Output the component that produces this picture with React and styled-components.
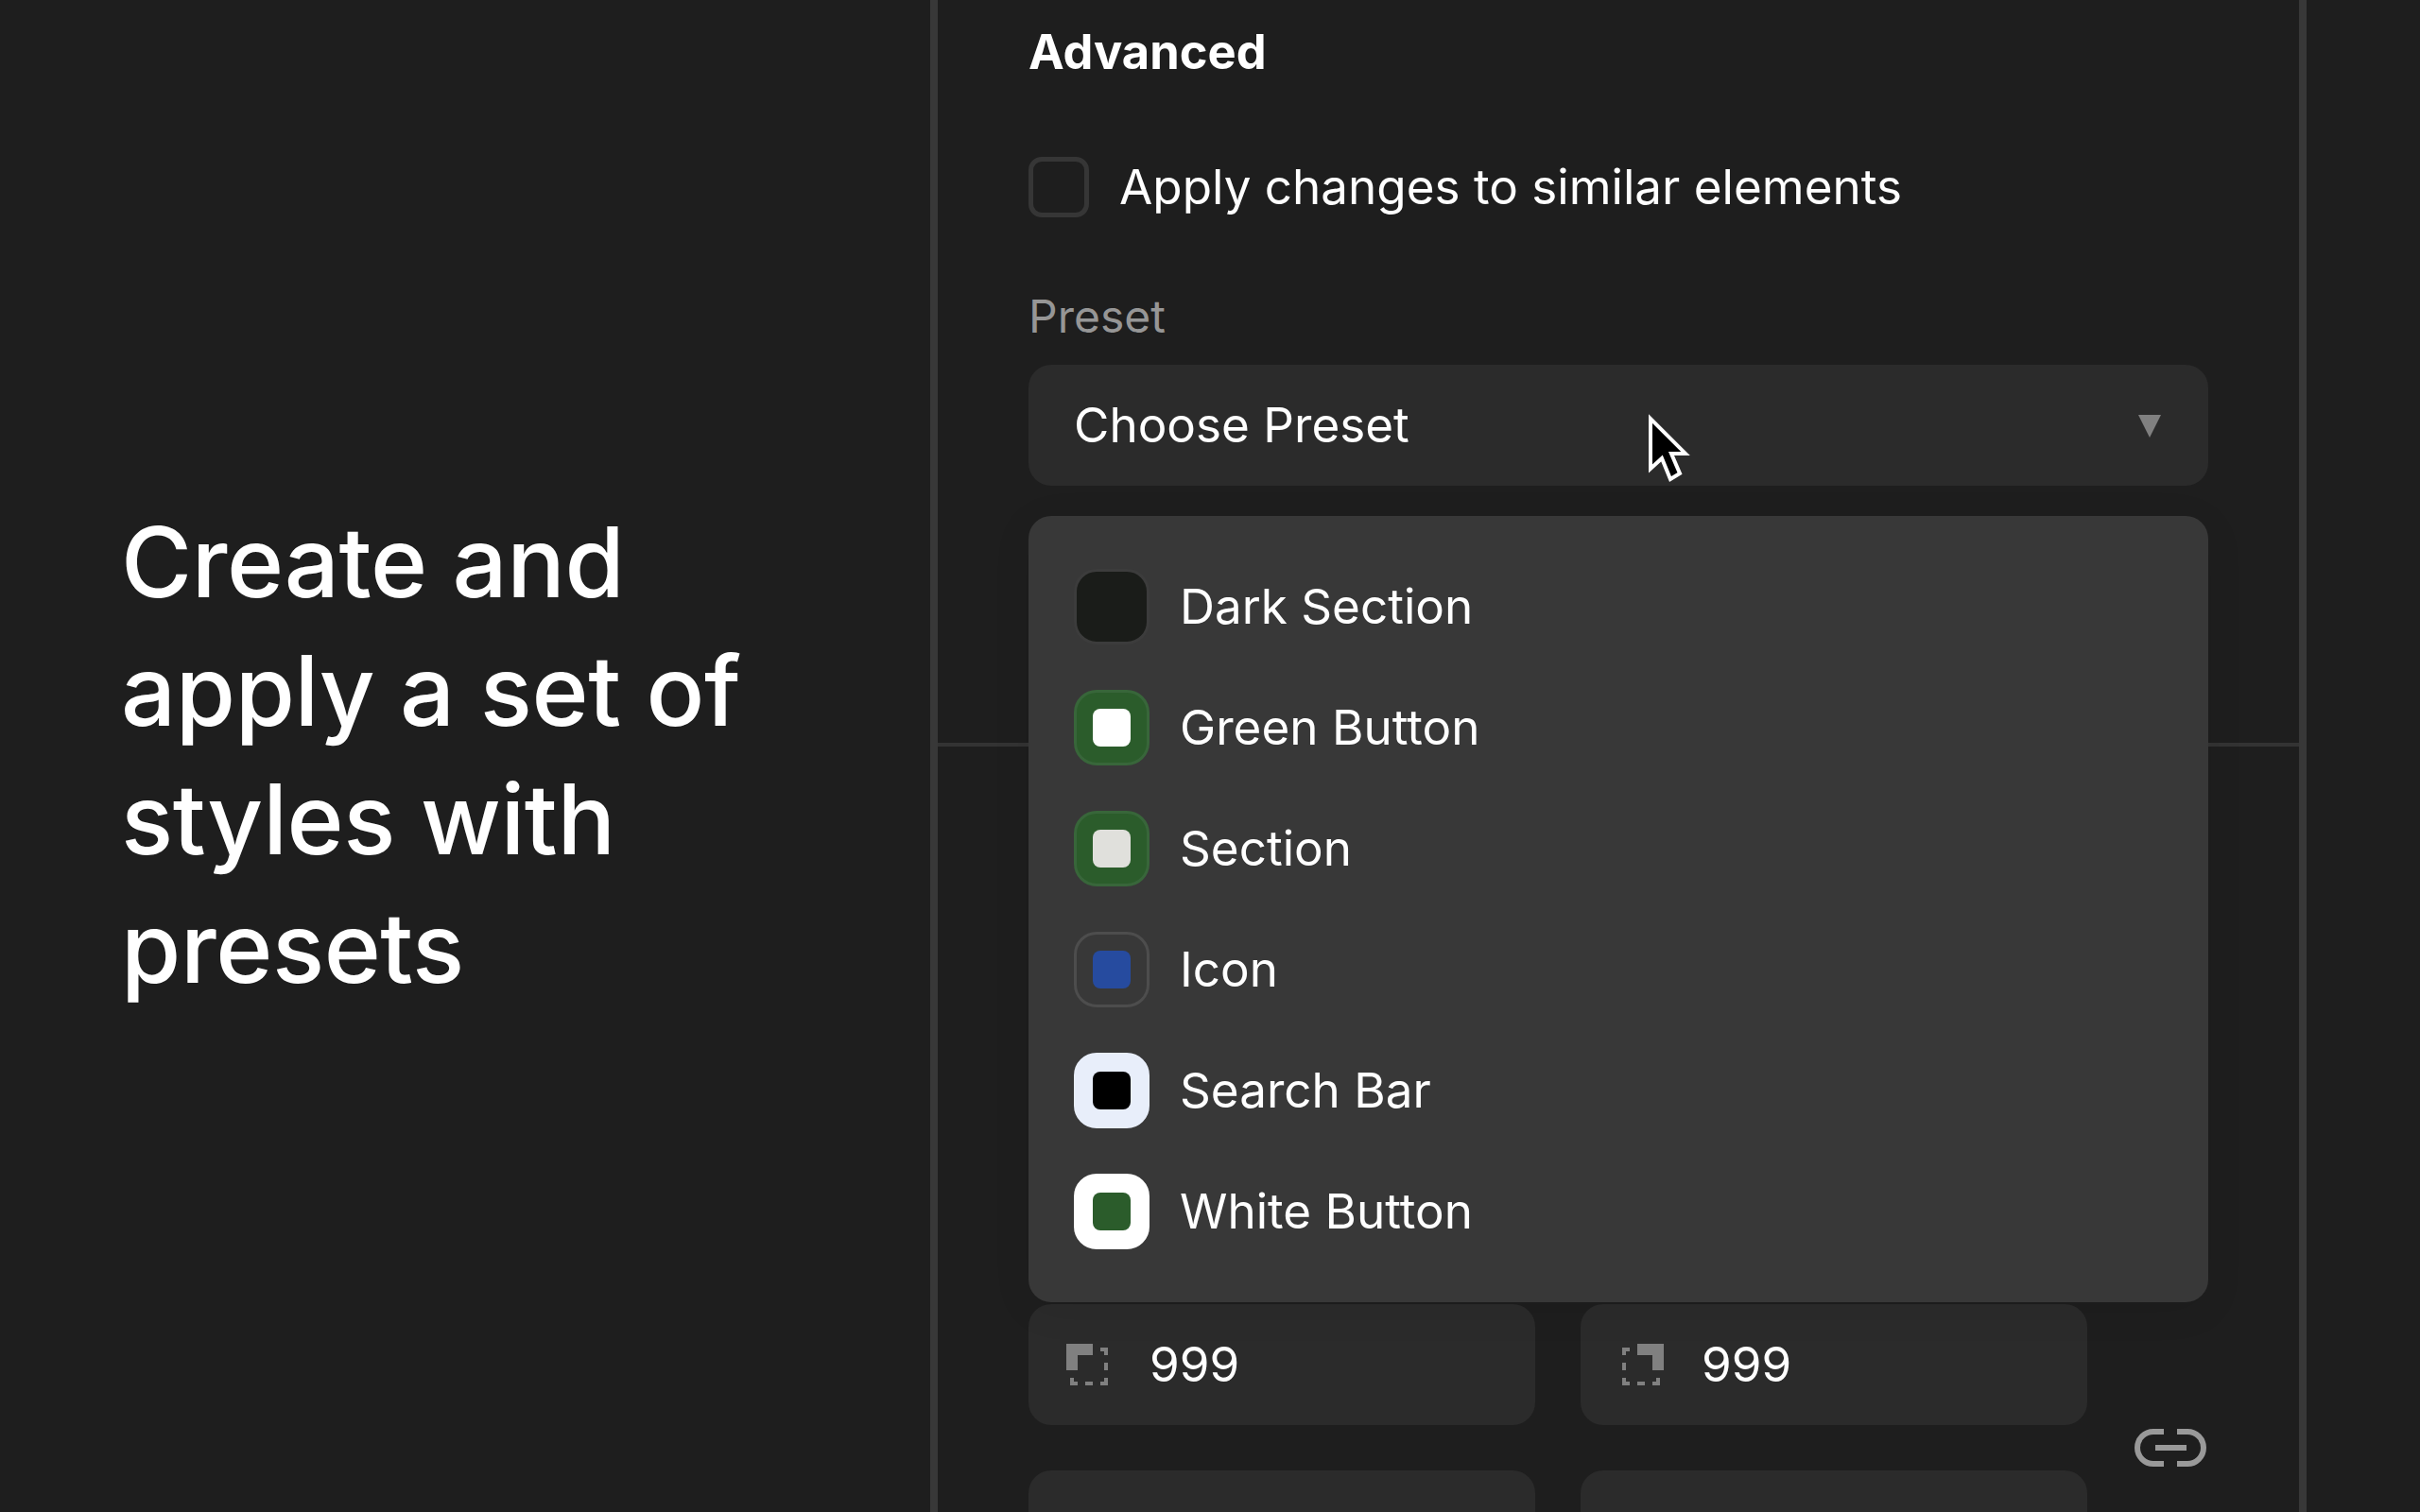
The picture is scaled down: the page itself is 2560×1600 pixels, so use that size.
import React from 'react';
import styled, { createGlobalStyle } from 'styled-components';

const presets = [
	{ name: 'Dark Section', bg: '#1a1c19', edge: '#3c3c3c', inner: 'transparent' },
	{ name: 'Green Button', bg: '#2b5c2b', edge: '#38663a', inner: '#ffffff' },
	{ name: 'Section', bg: '#2b5c2b', edge: '#38663a', inner: '#e0e0dc' },
	{ name: 'Icon', bg: 'transparent', edge: '#4d4d4d', inner: '#264b9f' },
	{ name: 'Search Bar', bg: '#e8eefa', edge: '#e8eefa', inner: '#000000' },
	{ name: 'White Button', bg: '#ffffff', edge: '#ffffff', inner: '#2b5c2b' },
];

const CornerIcon = ({ flip }) => (
	<CornerSvg $flip={flip} viewBox="0 0 44 44">
		<path d="M0 0H28V12H12V28H0Z" />
		<path d="M36 4H44V12H40V8H36ZM40 20H44V28H40ZM44 36V44H36V40H40V36ZM20 40H28V44H20ZM4 36H8V40H12V44H4Z" />
	</CornerSvg>
);

const App = () => {
	return (
		<Page>
			<GlobalStyle />
			<Intro>
				<Heading>
					Create and
					<br />
					apply a set of
					<br />
					styles with
					<br />
					presets
				</Heading>
			</Intro>
			<Panel>
				<TopSection>
					<Title>Advanced</Title>
					<CheckRow>
						<Checkbox />
						<span>Apply changes to similar elements</span>
					</CheckRow>
					<Label>Preset</Label>
					<SelectWrap>
						<Select>
							<span>Choose Preset</span>
							<Arrow viewBox="0 0 24 24">
								<path d="M0 0H24L12 24Z" />
							</Arrow>
						</Select>
						<Pointer viewBox="0 0 60 80">
							<path d="M6 9V62L18 51L27 73L37 67L28 46H43Z" />
						</Pointer>
						<Menu>
							{presets.map((p) => (
								<MenuItem key={p.name}>
									<Swatch $bg={p.bg} $edge={p.edge}>
										<SwatchInner $bg={p.inner} />
									</Swatch>
									<span>{p.name}</span>
								</MenuItem>
							))}
						</Menu>
					</SelectWrap>
				</TopSection>
				<RadiusSection>
					<FieldGrid>
						<Field>
							<CornerIcon />
							<span>999</span>
						</Field>
						<Field>
							<CornerIcon flip />
							<span>999</span>
						</Field>
						<Field />
						<Field />
					</FieldGrid>
					<LinkIcon viewBox="0 0 76 40">
						<path d="M31 3H20A17 17 0 0 0 20 37H31M45 3H56A17 17 0 0 1 56 37H45M22 20H55" />
					</LinkIcon>
				</RadiusSection>
			</Panel>
		</Page>
	);
};

const GlobalStyle = createGlobalStyle`
	html, body {
		margin: 0;
		padding: 0;
		background: #1e1e1e;
	}
`;

const Page = styled.div`
	width: 2560px;
	height: 1600px;
	display: flex;
	overflow: hidden;
	background: #1e1e1e;
	color: #ffffff;
	font-family: 'Inter', sans-serif;
`;

const Intro = styled.div`
	width: 984px;
	flex-shrink: 0;
	box-sizing: border-box;
	padding: 0 0 3px 128px;
	display: flex;
	align-items: center;
`;

const Heading = styled.h1`
	margin: 0;
	font-size: 102.4px;
	font-weight: 500;
	letter-spacing: -0.4px;
	line-height: 136px;
`;

const Panel = styled.div`
	width: 1456px;
	height: 1600px;
	flex-shrink: 0;
	box-sizing: border-box;
	border-left: 8px solid #383838;
	border-right: 8px solid #383838;
`;

const TopSection = styled.div`
	height: 790px;
	box-sizing: border-box;
	padding: 24px 96px 0;
	border-bottom: 4px solid #333333;
`;

const Title = styled.div`
	font-size: 50.6px;
	font-weight: 700;
	line-height: 62px;
`;

const CheckRow = styled.div`
	height: 64px;
	margin-top: 80px;
	display: flex;
	align-items: center;
	gap: 32px;
	font-size: 51.2px;
	line-height: 60px;
	span {
		margin-bottom: 3px;
	}
`;

const Checkbox = styled.div`
	width: 64px;
	height: 64px;
	box-sizing: border-box;
	border: 5px solid #363636;
	border-radius: 14px;
`;

const Label = styled.div`
	margin-top: 74px;
	font-size: 48px;
	line-height: 62px;
	color: #969696;
`;

const SelectWrap = styled.div`
	position: relative;
	margin-top: 20px;
`;

const Select = styled.div`
	height: 128px;
	box-sizing: border-box;
	padding: 0 50px 0 48px;
	display: flex;
	align-items: center;
	justify-content: space-between;
	background: #2b2b2b;
	border-radius: 24px;
	font-size: 51.2px;
	span {
		margin-bottom: 3px;
	}
`;

const Arrow = styled.svg`
	width: 24px;
	height: 24px;
	fill: #808080;
	margin-top: 2px;
`;

const Pointer = styled.svg`
	position: absolute;
	left: 652px;
	top: 48px;
	width: 60px;
	height: 80px;
	fill: #000000;
	stroke: #ffffff;
	stroke-width: 4px;
`;

const Menu = styled.div`
	position: absolute;
	left: 0;
	right: 0;
	top: 160px;
	padding: 32px 48px;
	background: #383838;
	border-radius: 24px;
	box-shadow: 0 8px 40px rgba(0, 0, 0, 0.08);
	z-index: 2;
`;

const MenuItem = styled.div`
	height: 128px;
	display: flex;
	align-items: center;
	gap: 32px;
	font-size: 51.2px;
	span {
		margin-bottom: 3px;
	}
`;

const Swatch = styled.div`
	width: 80px;
	height: 80px;
	box-sizing: border-box;
	display: flex;
	align-items: center;
	justify-content: center;
	background: ${(p) => p.$bg};
	border: 3px solid ${(p) => p.$edge};
	border-radius: 24px;
`;

const SwatchInner = styled.div`
	width: 40px;
	height: 40px;
	border-radius: 8px;
	background: ${(p) => p.$bg};
`;

const RadiusSection = styled.div`
	position: relative;
	padding: 590px 96px 0;
`;

const FieldGrid = styled.div`
	width: 1120px;
	display: grid;
	grid-template-columns: 536px 536px;
	gap: 48px;
`;

const Field = styled.div`
	height: 128px;
	box-sizing: border-box;
	padding-left: 40px;
	display: flex;
	align-items: center;
	gap: 44px;
	background: #2b2b2b;
	border-radius: 24px;
	font-size: 51.2px;
	span {
		margin-bottom: 3px;
	}
`;

const CornerSvg = styled.svg`
	width: 44px;
	height: 44px;
	fill: #808080;
	transform: ${(p) => (p.$flip ? 'scaleX(-1)' : 'none')};
	margin-left: ${(p) => (p.$flip ? '4px' : '0')};
	margin-right: ${(p) => (p.$flip ? '-4px' : '0')};
`;

const LinkIcon = styled.svg`
	position: absolute;
	left: 1266px;
	top: 722px;
	width: 76px;
	height: 40px;
	fill: none;
	stroke: #999999;
	stroke-width: 6px;
`;

export default App;
